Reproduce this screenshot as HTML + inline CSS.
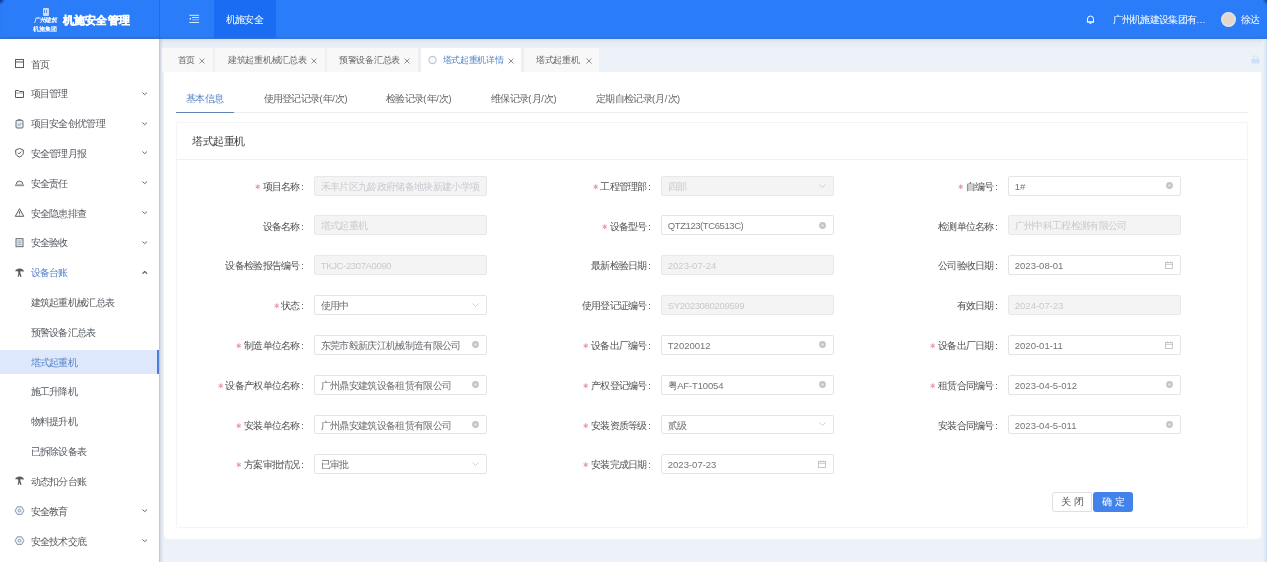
<!DOCTYPE html><html><head><meta charset="utf-8"><style>
*{box-sizing:border-box;margin:0;padding:0}
html,body{width:1267px;height:562px;overflow:hidden;background:#edf1f8;font-family:"Liberation Sans",sans-serif;color:#606266}
.a{position:absolute;white-space:nowrap}
svg{position:absolute;overflow:visible}
#hdr{position:absolute;left:0;top:0;width:1267px;height:38.5px;background:#2b7cf8;box-shadow:inset 0 -2px 1.5px rgba(80,100,150,.32)}
#side{position:absolute;left:0;top:38.5px;width:160px;height:524px;background:#fff;border-right:1px solid #c3c7cf;box-shadow:1px 0 3px rgba(0,21,41,.15)}
.mt{position:absolute;font-size:10px;line-height:12px;color:#525356;white-space:nowrap;letter-spacing:-0.7px}
.lat{font-size:9.2px;letter-spacing:0}
.it .lat{color:#737478;font-size:9.5px}
.it.dis .lat{color:#c8cacf}
.tab{position:absolute;top:48px;height:24px;background:#f8f8f9}
.tt{position:absolute;font-size:9.4px;line-height:12px;color:#666;white-space:nowrap;letter-spacing:-0.3px}
#card{position:absolute;left:164px;top:71.5px;width:1097px;height:467.7px;background:#fff;border-radius:2px 2px 4px 4px}
.lab{position:absolute;font-size:10px;line-height:12px;color:#505153;white-space:nowrap;text-align:right;letter-spacing:-0.7px}
.req{position:relative;display:inline-block;vertical-align:baseline;top:-0.5px;margin-right:2px}
.inp{position:absolute;width:173.6px;height:19.8px;border:1px solid #e4e4e6;border-radius:2px;background:#fff}
.inp.dis{background:#f4f4f5;border-color:#e8e8e9}
.it{position:absolute;font-size:10px;line-height:12px;color:#6a6c70;white-space:nowrap;letter-spacing:-0.67px}
.it.dis{color:#c8cacf}
</style></head><body><div id="root" style="position:absolute;left:0;top:0;width:1267px;height:562px;overflow:hidden;will-change:transform">
<div class="a" style="left:160px;top:38px;width:1107px;height:10px;background:linear-gradient(to bottom,#d3e1fb 0,#dfe4f0 25%,#e3f0f8 55%,#efecf5 88%,#ecf0f8 100%)"></div>
<div id="hdr"></div>
<div class="a" style="left:159px;top:0;width:1px;height:38px;background:rgba(0,40,140,.18)"></div>
<div class="a" style="left:214px;top:0;width:62px;height:38px;background:#1a6cf2"></div>
<div class="a" style="left:225.5px;top:13.5px;font-size:10px;letter-spacing:-0.6px;line-height:12px;color:#fff">机施安全</div>
<svg style="left:188.5px;top:14px" width="11" height="10" viewBox="0 0 11 10"><g fill="#dcecff"><rect x="0.3" y="0.8" width="9.8" height="1"/><rect x="3" y="3" width="7.1" height="0.9"/><rect x="3" y="5.4" width="7.1" height="0.9" opacity=".7"/><rect x="0.3" y="8" width="9.8" height="1"/><ellipse cx="1.3" cy="4.8" rx="0.8" ry="1.1"/></g></svg>
<div class="a" style="left:42.5px;top:8px;width:6.5px;height:8px;background:#c9dcfb;border-radius:1px"></div>
<div class="a" style="left:44px;top:10px;width:1.2px;height:2.5px;background:#5a8de0"></div>
<div class="a" style="left:46.3px;top:10px;width:1.2px;height:2.5px;background:#5a8de0"></div>
<div class="a" style="left:34px;top:17px;font-size:6px;line-height:7px;color:#fff;font-weight:bold;font-family:'Liberation Serif',serif;font-style:italic;letter-spacing:-0.5px">广州建筑</div>
<div class="a" style="left:33px;top:25px;font-size:6.2px;line-height:7px;color:#fff;font-weight:bold">机施集团</div>
<div class="a" style="left:63px;top:13.5px;letter-spacing:0.15px;font-size:11.1px;line-height:13px;color:#fff;font-weight:700;-webkit-text-stroke:0.35px #fff">机施安全管理</div>
<svg style="left:1086px;top:15px" width="9" height="9" viewBox="0 0 9 9"><path d="M1.5 7 V4 a3 3 0 0 1 6 0 V7 Z M0.8 7 H8.2 M3.5 8.3 H5.5" fill="none" stroke="#fff" stroke-width="1"/></svg>
<div class="a" style="left:1112.5px;top:13.5px;font-size:10px;letter-spacing:-0.67px;line-height:12px;color:#fff">广州机施建设集团有<span class="lat" style="letter-spacing:0.6px">...</span></div>
<div class="a" style="left:1221px;top:11.5px;width:15px;height:15px;border-radius:50%;background:radial-gradient(circle,#e6d5c9 0,#e3d6d2 50%,#e6e9f2 68%,#edf2fa 100%)"></div>
<div class="a" style="left:1241px;top:13.5px;font-size:10px;letter-spacing:-0.6px;line-height:12px;color:#fff">徐达</div>
<div id="side"></div>
<div class="mt" style="left:30.5px;top:58.5px;color:#555a60">首页</div>
<svg style="left:15px;top:59.0px" width="9" height="9" viewBox="0 0 9 9"><rect x="0.5" y="0.5" width="8" height="8" fill="none" stroke="#5a5c60"/><path d="M0.5 3H8.5" stroke="#5a5c60"/></svg>
<div class="mt" style="left:30.5px;top:88.3px;color:#555a60">项目管理</div>
<svg style="left:15px;top:88.8px" width="9" height="9" viewBox="0 0 9 9"><path d="M0.5 1.5H3.5L4.5 2.5H8.5V8.5H0.5Z" fill="none" stroke="#5a5c60"/><path d="M0.5 4H8.5" stroke="#5a5c60" stroke-width=".6"/></svg>
<svg style="left:142px;top:91.7px" width="5.5" height="3.2" viewBox="0 0 5.5 3.2"><path d="M0.5 0.5L2.75 2.7L5 0.5" fill="none" stroke="#666" stroke-width="1"/></svg>
<div class="mt" style="left:30.5px;top:118.1px;color:#555a60">项目安全创优管理</div>
<svg style="left:15px;top:118.6px" width="9" height="9" viewBox="0 0 9 9"><rect x="1" y="1.3" width="7" height="7.7" rx="1" fill="#e8eef8" stroke="#5a5c60" stroke-width="0.9"/><path d="M3.2 1.3V0.5H5.8V1.3M2.8 5.2L4.1 6.4L6.3 4" fill="none" stroke="#6f7f99" stroke-width="0.9"/></svg>
<svg style="left:142px;top:121.5px" width="5.5" height="3.2" viewBox="0 0 5.5 3.2"><path d="M0.5 0.5L2.75 2.7L5 0.5" fill="none" stroke="#666" stroke-width="1"/></svg>
<div class="mt" style="left:30.5px;top:147.9px;color:#555a60">安全管理月报</div>
<svg style="left:15px;top:148.4px" width="9" height="9" viewBox="0 0 9 9"><path d="M4.5 0.5L8.3 2V4.8C8.3 7 6.5 8.3 4.5 9 C2.5 8.3 0.7 7 0.7 4.8V2Z" fill="none" stroke="#5a5c60"/><path d="M2.9 4.7L4.1 5.9L6.2 3.6" fill="none" stroke="#5a5c60"/></svg>
<svg style="left:142px;top:151.3px" width="5.5" height="3.2" viewBox="0 0 5.5 3.2"><path d="M0.5 0.5L2.75 2.7L5 0.5" fill="none" stroke="#666" stroke-width="1"/></svg>
<div class="mt" style="left:30.5px;top:177.7px;color:#555a60">安全责任</div>
<svg style="left:15px;top:178.2px" width="9" height="9" viewBox="0 0 9 9"><path d="M1.2 6.3A3.3 3.3 0 0 1 7.8 6.3" fill="#eef0f4" stroke="#5a5c60" stroke-width="0.9"/><path d="M0.3 6.8H8.7V7.8H0.3Z" fill="#b9bcc3" stroke="#5a5c60" stroke-width="0.5"/></svg>
<svg style="left:142px;top:181.1px" width="5.5" height="3.2" viewBox="0 0 5.5 3.2"><path d="M0.5 0.5L2.75 2.7L5 0.5" fill="none" stroke="#666" stroke-width="1"/></svg>
<div class="mt" style="left:30.5px;top:207.5px;color:#555a60">安全隐患排查</div>
<svg style="left:15px;top:208.0px" width="9" height="9" viewBox="0 0 9 9"><path d="M4.5 0.7L8.7 8.3H0.3Z" fill="none" stroke="#5a5c60"/><path d="M4.5 3.3V5.8M4.5 6.6V7.4" stroke="#5a5c60"/></svg>
<svg style="left:142px;top:210.9px" width="5.5" height="3.2" viewBox="0 0 5.5 3.2"><path d="M0.5 0.5L2.75 2.7L5 0.5" fill="none" stroke="#666" stroke-width="1"/></svg>
<div class="mt" style="left:30.5px;top:237.4px;color:#555a60">安全验收</div>
<svg style="left:15px;top:237.9px" width="9" height="9" viewBox="0 0 9 9"><rect x="1" y="0.7" width="7" height="8" fill="#e9eef7" stroke="#5a5c60" stroke-width="0.9"/><path d="M2.5 3H6.5M2.5 4.8H6.5M2.5 6.6H6.5" stroke="#7d8aa0" stroke-width="0.7"/></svg>
<svg style="left:142px;top:240.8px" width="5.5" height="3.2" viewBox="0 0 5.5 3.2"><path d="M0.5 0.5L2.75 2.7L5 0.5" fill="none" stroke="#666" stroke-width="1"/></svg>
<div class="mt" style="left:30.5px;top:267.2px;color:#5683c8">设备台账</div>
<svg style="left:15px;top:267.7px" width="9" height="9" viewBox="0 0 9 9"><path d="M0 3.2C1 1.2 3 0.3 5 0.5C7 0.7 8.6 1.8 9.2 3.4L5.6 3.2L5.3 4.5L6.6 8.8H5L4.4 6.3L3.6 8.8H2.6L3.4 5.2L3 3.3Z" fill="#5a5c60"/></svg>
<svg style="left:142px;top:270.6px" width="5.5" height="3.2" viewBox="0 0 5.5 3.2"><path d="M0.5 2.7L2.75 0.5L5 2.7" fill="none" stroke="#555" stroke-width="1.1"/></svg>
<div class="mt" style="left:30.5px;top:297.0px;color:#555a60">建筑起重机械汇总表</div>
<div class="mt" style="left:30.5px;top:326.8px;color:#555a60">预警设备汇总表</div>
<div class="a" style="left:0;top:349.6px;width:159px;height:24px;background:#dde8fc"></div>
<div class="a" style="left:157px;top:349.6px;width:2px;height:24px;background:#4a7fd8"></div>
<div class="mt" style="left:30.5px;top:356.6px;color:#5683c8">塔式起重机</div>
<div class="mt" style="left:30.5px;top:386.4px;color:#555a60">施工升降机</div>
<div class="mt" style="left:30.5px;top:416.2px;color:#555a60">物料提升机</div>
<div class="mt" style="left:30.5px;top:446.0px;color:#555a60">已拆除设备表</div>
<div class="mt" style="left:30.5px;top:475.8px;color:#555a60">动态扣分台账</div>
<svg style="left:15px;top:476.3px" width="9" height="9" viewBox="0 0 9 9"><path d="M0 3.2C1 1.2 3 0.3 5 0.5C7 0.7 8.6 1.8 9.2 3.4L5.6 3.2L5.3 4.5L6.6 8.8H5L4.4 6.3L3.6 8.8H2.6L3.4 5.2L3 3.3Z" fill="#5a5c60"/></svg>
<div class="mt" style="left:30.5px;top:505.6px;color:#555a60">安全教育</div>
<svg style="left:15px;top:506.1px" width="9" height="9" viewBox="0 0 9 9"><path d="M2.3 0.8H6.7L8.9 4.6L6.7 8.4H2.3L0.1 4.6Z" fill="#eef3fb" stroke="#7a8aa0" stroke-width="0.9"/><circle cx="4.5" cy="4.6" r="1.3" fill="none" stroke="#7a8aa0" stroke-width="0.8"/></svg>
<svg style="left:142px;top:509.0px" width="5.5" height="3.2" viewBox="0 0 5.5 3.2"><path d="M0.5 0.5L2.75 2.7L5 0.5" fill="none" stroke="#666" stroke-width="1"/></svg>
<div class="mt" style="left:30.5px;top:535.5px;color:#555a60">安全技术交底</div>
<svg style="left:15px;top:536.0px" width="9" height="9" viewBox="0 0 9 9"><path d="M2.3 0.8H6.7L8.9 4.6L6.7 8.4H2.3L0.1 4.6Z" fill="#eef3fb" stroke="#7a8aa0" stroke-width="0.9"/><circle cx="4.5" cy="4.6" r="1.3" fill="none" stroke="#7a8aa0" stroke-width="0.8"/></svg>
<svg style="left:142px;top:538.9px" width="5.5" height="3.2" viewBox="0 0 5.5 3.2"><path d="M0.5 0.5L2.75 2.7L5 0.5" fill="none" stroke="#666" stroke-width="1"/></svg>
<div class="a" style="left:162px;top:48px;width:437px;height:24px;background:#eeeff2"></div>
<div class="tab" style="left:162px;width:51px;background:#f8f8f9"></div>
<div class="tt" style="left:177.5px;top:54px;color:#666">首页</div>
<svg style="left:199px;top:57.5px" width="6" height="6" viewBox="0 0 6 6"><path d="M0.5 0.5L5.5 5.5M5.5 0.5L0.5 5.5" stroke="#8c8c8c" stroke-width="0.95"/></svg>
<div class="tab" style="left:215px;width:110px;background:#f8f8f9"></div>
<div class="tt" style="left:228px;top:54px;color:#666">建筑起重机械汇总表</div>
<svg style="left:311px;top:57.5px" width="6" height="6" viewBox="0 0 6 6"><path d="M0.5 0.5L5.5 5.5M5.5 0.5L0.5 5.5" stroke="#8c8c8c" stroke-width="0.95"/></svg>
<div class="tab" style="left:327px;width:91px;background:#f8f8f9"></div>
<div class="tt" style="left:339px;top:54px;color:#666">预警设备汇总表</div>
<svg style="left:404px;top:57.5px" width="6" height="6" viewBox="0 0 6 6"><path d="M0.5 0.5L5.5 5.5M5.5 0.5L0.5 5.5" stroke="#8c8c8c" stroke-width="0.95"/></svg>
<div class="tab" style="left:421px;width:100px;background:#fff"></div>
<div class="tt" style="left:442.5px;top:54px;color:#5683c8">塔式起重机详情</div>
<svg style="left:508px;top:57.5px" width="6" height="6" viewBox="0 0 6 6"><path d="M0.5 0.5L5.5 5.5M5.5 0.5L0.5 5.5" stroke="#8c8c8c" stroke-width="0.95"/></svg>
<div class="tab" style="left:524px;width:75px;background:#f8f8f9"></div>
<div class="tt" style="left:536px;top:54px;color:#666">塔式起重机</div>
<svg style="left:586px;top:57.5px" width="6" height="6" viewBox="0 0 6 6"><path d="M0.5 0.5L5.5 5.5M5.5 0.5L0.5 5.5" stroke="#8c8c8c" stroke-width="0.95"/></svg>
<svg style="left:428px;top:56px" width="9" height="8" viewBox="0 0 9 8"><circle cx="4.5" cy="4" r="3.6" fill="#f6f9fd" stroke="#bcc6d3" stroke-width="1.1"/></svg>
<svg style="left:1250.5px;top:55px" width="9" height="9" viewBox="0 0 9 9"><path d="M2.3 4.2V3a2.2 2.2 0 0 1 4.4 0V4.2" fill="none" stroke="#d8e6fa" stroke-width="1.3"/><rect x="0.5" y="4" width="8" height="4.6" rx="0.6" fill="#cde0f8"/></svg>
<div id="card"></div>
<div class="a" style="left:186px;top:92.8px;font-size:10px;letter-spacing:-0.67px;line-height:12px;color:#5683c8">基本信息</div>
<div class="a" style="left:263.5px;top:92.8px;font-size:10px;letter-spacing:-0.67px;line-height:12px;color:#606266">使用登记记录<span class="lat" style="letter-spacing:0.4px">(</span>年<span class="lat" style="letter-spacing:0.4px">/</span>次<span class="lat" style="letter-spacing:0.4px">)</span></div>
<div class="a" style="left:386px;top:92.8px;font-size:10px;letter-spacing:-0.67px;line-height:12px;color:#606266">检验记录<span class="lat" style="letter-spacing:0.4px">(</span>年<span class="lat" style="letter-spacing:0.4px">/</span>次<span class="lat" style="letter-spacing:0.4px">)</span></div>
<div class="a" style="left:491px;top:92.8px;font-size:10px;letter-spacing:-0.67px;line-height:12px;color:#606266">维保记录<span class="lat" style="letter-spacing:0.4px">(</span>月<span class="lat" style="letter-spacing:0.4px">/</span>次<span class="lat" style="letter-spacing:0.4px">)</span></div>
<div class="a" style="left:596px;top:92.8px;font-size:10px;letter-spacing:-0.67px;line-height:12px;color:#606266">定期自检记录<span class="lat" style="letter-spacing:0.4px">(</span>月<span class="lat" style="letter-spacing:0.4px">/</span>次<span class="lat" style="letter-spacing:0.4px">)</span></div>
<div class="a" style="left:176px;top:111.5px;width:1072px;height:1px;background:#eceef1"></div>
<div class="a" style="left:176px;top:111.5px;width:57.5px;height:1.3px;background:#6484b8"></div>
<div class="a" style="left:176px;top:122px;width:1072px;height:405.5px;border:1px solid #f3f4f6;border-radius:2px"></div>
<div class="a" style="left:192px;top:135px;font-size:11px;line-height:13px;color:#3a3a3a;letter-spacing:-0.4px">塔式起重机</div>
<div class="a" style="left:177px;top:158.5px;width:1070px;height:1px;background:#eff0f2"></div>
<div class="lab" style="right:963.2px;top:181.2px"><svg class="req" width="5.5" height="5.5" viewBox="0 0 10 10"><path d="M5 0.5V9.5M1.1 2.75L8.9 7.25M8.9 2.75L1.1 7.25" stroke="#e58f99" stroke-width="1.7"/></svg>项目名称<span class="lat" style="margin-left:1.5px">:</span></div>
<div class="inp dis" style="left:313.8px;top:176.1px"></div>
<div class="it dis" style="left:320.8px;top:181.0px">禾丰片区九龄政府储备地块新建小学项</div>
<div class="lab" style="right:616.2px;top:181.2px"><svg class="req" width="5.5" height="5.5" viewBox="0 0 10 10"><path d="M5 0.5V9.5M1.1 2.75L8.9 7.25M8.9 2.75L1.1 7.25" stroke="#e58f99" stroke-width="1.7"/></svg>工程管理部<span class="lat" style="margin-left:1.5px">:</span></div>
<div class="inp dis" style="left:660.8px;top:176.1px"></div>
<div class="it dis" style="left:667.8px;top:181.0px">四部</div>
<svg style="left:818.8px;top:183.8px" width="7" height="4" viewBox="0 0 7 4"><path d="M0.5 0.5L3.5 3.5L6.5 0.5" fill="none" stroke="#c4c6cb" stroke-width=".8"/></svg>
<div class="lab" style="right:269.20000000000005px;top:181.2px"><svg class="req" width="5.5" height="5.5" viewBox="0 0 10 10"><path d="M5 0.5V9.5M1.1 2.75L8.9 7.25M8.9 2.75L1.1 7.25" stroke="#e58f99" stroke-width="1.7"/></svg>自编号<span class="lat" style="margin-left:1.5px">:</span></div>
<div class="inp " style="left:1007.8px;top:176.1px"></div>
<div class="it " style="left:1014.8px;top:181.0px"><span class="lat">1#</span></div>
<svg style="left:1165.8px;top:182.3px" width="7" height="7" viewBox="0 0 7 7"><circle cx="3.5" cy="3.5" r="3.4" fill="#c2c4c8"/><circle cx="3.5" cy="3.5" r="1.2" fill="#e4e5e8"/></svg>
<div class="lab" style="right:963.2px;top:220.5px">设备名称<span class="lat" style="margin-left:1.5px">:</span></div>
<div class="inp dis" style="left:313.8px;top:215.3px"></div>
<div class="it dis" style="left:320.8px;top:220.2px">塔式起重机</div>
<div class="lab" style="right:616.2px;top:220.5px"><svg class="req" width="5.5" height="5.5" viewBox="0 0 10 10"><path d="M5 0.5V9.5M1.1 2.75L8.9 7.25M8.9 2.75L1.1 7.25" stroke="#e58f99" stroke-width="1.7"/></svg>设备型号<span class="lat" style="margin-left:1.5px">:</span></div>
<div class="inp " style="left:660.8px;top:215.3px"></div>
<div class="it " style="left:667.8px;top:220.2px"><span class="lat" style="letter-spacing:-0.42px">QTZ123(TC6513C)</span></div>
<svg style="left:818.8px;top:221.6px" width="7" height="7" viewBox="0 0 7 7"><circle cx="3.5" cy="3.5" r="3.4" fill="#c2c4c8"/><circle cx="3.5" cy="3.5" r="1.2" fill="#e4e5e8"/></svg>
<div class="lab" style="right:269.20000000000005px;top:220.5px">检测单位名称<span class="lat" style="margin-left:1.5px">:</span></div>
<div class="inp dis" style="left:1007.8px;top:215.3px"></div>
<div class="it dis" style="left:1014.8px;top:220.2px">广州中科工程检测有限公司</div>
<div class="lab" style="right:963.2px;top:260.2px">设备检验报告编号<span class="lat" style="margin-left:1.5px">:</span></div>
<div class="inp dis" style="left:313.8px;top:255.1px"></div>
<div class="it dis" style="left:320.8px;top:260.1px"><span class="lat" style="letter-spacing:-0.36px">TKJC-2307A0090</span></div>
<div class="lab" style="right:616.2px;top:260.2px">最新检验日期<span class="lat" style="margin-left:1.5px">:</span></div>
<div class="inp dis" style="left:660.8px;top:255.1px"></div>
<div class="it dis" style="left:667.8px;top:260.1px"><span class="lat">2023-07-24</span></div>
<div class="lab" style="right:269.20000000000005px;top:260.2px">公司验收日期<span class="lat" style="margin-left:1.5px">:</span></div>
<div class="inp " style="left:1007.8px;top:255.1px"></div>
<div class="it " style="left:1014.8px;top:260.1px"><span class="lat">2023-08-01</span></div>
<svg style="left:1165.3px;top:260.9px" width="8" height="8" viewBox="0 0 8 8"><rect x="0.5" y="1.5" width="7" height="6" fill="none" stroke="#b8babf" stroke-width=".8"/><path d="M0.5 3.3H7.5M2.3 0.5V2M5.7 0.5V2" stroke="#b8babf" stroke-width=".8"/></svg>
<div class="lab" style="right:963.2px;top:300.0px"><svg class="req" width="5.5" height="5.5" viewBox="0 0 10 10"><path d="M5 0.5V9.5M1.1 2.75L8.9 7.25M8.9 2.75L1.1 7.25" stroke="#e58f99" stroke-width="1.7"/></svg>状态<span class="lat" style="margin-left:1.5px">:</span></div>
<div class="inp " style="left:313.8px;top:294.9px"></div>
<div class="it " style="left:320.8px;top:299.8px">使用中</div>
<svg style="left:471.8px;top:302.6px" width="7" height="4" viewBox="0 0 7 4"><path d="M0.5 0.5L3.5 3.5L6.5 0.5" fill="none" stroke="#c4c6cb" stroke-width=".8"/></svg>
<div class="lab" style="right:616.2px;top:300.0px">使用登记证编号<span class="lat" style="margin-left:1.5px">:</span></div>
<div class="inp dis" style="left:660.8px;top:294.9px"></div>
<div class="it dis" style="left:667.8px;top:299.8px"><span class="lat" style="letter-spacing:-0.33px">SY2023080209599</span></div>
<div class="lab" style="right:269.20000000000005px;top:300.0px">有效日期<span class="lat" style="margin-left:1.5px">:</span></div>
<div class="inp dis" style="left:1007.8px;top:294.9px"></div>
<div class="it dis" style="left:1014.8px;top:299.8px"><span class="lat">2024-07-23</span></div>
<div class="lab" style="right:963.2px;top:340.3px"><svg class="req" width="5.5" height="5.5" viewBox="0 0 10 10"><path d="M5 0.5V9.5M1.1 2.75L8.9 7.25M8.9 2.75L1.1 7.25" stroke="#e58f99" stroke-width="1.7"/></svg>制造单位名称<span class="lat" style="margin-left:1.5px">:</span></div>
<div class="inp " style="left:313.8px;top:335.2px"></div>
<div class="it " style="left:320.8px;top:340.1px">东莞市毅新庆江机械制造有限公司</div>
<svg style="left:471.8px;top:341.4px" width="7" height="7" viewBox="0 0 7 7"><circle cx="3.5" cy="3.5" r="3.4" fill="#c2c4c8"/><circle cx="3.5" cy="3.5" r="1.2" fill="#e4e5e8"/></svg>
<div class="lab" style="right:616.2px;top:340.3px"><svg class="req" width="5.5" height="5.5" viewBox="0 0 10 10"><path d="M5 0.5V9.5M1.1 2.75L8.9 7.25M8.9 2.75L1.1 7.25" stroke="#e58f99" stroke-width="1.7"/></svg>设备出厂编号<span class="lat" style="margin-left:1.5px">:</span></div>
<div class="inp " style="left:660.8px;top:335.2px"></div>
<div class="it " style="left:667.8px;top:340.1px"><span class="lat">T2020012</span></div>
<svg style="left:818.8px;top:341.4px" width="7" height="7" viewBox="0 0 7 7"><circle cx="3.5" cy="3.5" r="3.4" fill="#c2c4c8"/><circle cx="3.5" cy="3.5" r="1.2" fill="#e4e5e8"/></svg>
<div class="lab" style="right:269.20000000000005px;top:340.3px"><svg class="req" width="5.5" height="5.5" viewBox="0 0 10 10"><path d="M5 0.5V9.5M1.1 2.75L8.9 7.25M8.9 2.75L1.1 7.25" stroke="#e58f99" stroke-width="1.7"/></svg>设备出厂日期<span class="lat" style="margin-left:1.5px">:</span></div>
<div class="inp " style="left:1007.8px;top:335.2px"></div>
<div class="it " style="left:1014.8px;top:340.1px"><span class="lat">2020-01-11</span></div>
<svg style="left:1165.3px;top:340.9px" width="8" height="8" viewBox="0 0 8 8"><rect x="0.5" y="1.5" width="7" height="6" fill="none" stroke="#b8babf" stroke-width=".8"/><path d="M0.5 3.3H7.5M2.3 0.5V2M5.7 0.5V2" stroke="#b8babf" stroke-width=".8"/></svg>
<div class="lab" style="right:963.2px;top:380.0px"><svg class="req" width="5.5" height="5.5" viewBox="0 0 10 10"><path d="M5 0.5V9.5M1.1 2.75L8.9 7.25M8.9 2.75L1.1 7.25" stroke="#e58f99" stroke-width="1.7"/></svg>设备产权单位名称<span class="lat" style="margin-left:1.5px">:</span></div>
<div class="inp " style="left:313.8px;top:374.9px"></div>
<div class="it " style="left:320.8px;top:379.8px">广州鼎安建筑设备租赁有限公司</div>
<svg style="left:471.8px;top:381.1px" width="7" height="7" viewBox="0 0 7 7"><circle cx="3.5" cy="3.5" r="3.4" fill="#c2c4c8"/><circle cx="3.5" cy="3.5" r="1.2" fill="#e4e5e8"/></svg>
<div class="lab" style="right:616.2px;top:380.0px"><svg class="req" width="5.5" height="5.5" viewBox="0 0 10 10"><path d="M5 0.5V9.5M1.1 2.75L8.9 7.25M8.9 2.75L1.1 7.25" stroke="#e58f99" stroke-width="1.7"/></svg>产权登记编号<span class="lat" style="margin-left:1.5px">:</span></div>
<div class="inp " style="left:660.8px;top:374.9px"></div>
<div class="it " style="left:667.8px;top:379.8px">粤<span class="lat" style="letter-spacing:-0.15px">AF-T10054</span></div>
<svg style="left:818.8px;top:381.1px" width="7" height="7" viewBox="0 0 7 7"><circle cx="3.5" cy="3.5" r="3.4" fill="#c2c4c8"/><circle cx="3.5" cy="3.5" r="1.2" fill="#e4e5e8"/></svg>
<div class="lab" style="right:269.20000000000005px;top:380.0px"><svg class="req" width="5.5" height="5.5" viewBox="0 0 10 10"><path d="M5 0.5V9.5M1.1 2.75L8.9 7.25M8.9 2.75L1.1 7.25" stroke="#e58f99" stroke-width="1.7"/></svg>租赁合同编号<span class="lat" style="margin-left:1.5px">:</span></div>
<div class="inp " style="left:1007.8px;top:374.9px"></div>
<div class="it " style="left:1014.8px;top:379.8px"><span class="lat">2023-04-5-012</span></div>
<svg style="left:1165.8px;top:381.1px" width="7" height="7" viewBox="0 0 7 7"><circle cx="3.5" cy="3.5" r="3.4" fill="#c2c4c8"/><circle cx="3.5" cy="3.5" r="1.2" fill="#e4e5e8"/></svg>
<div class="lab" style="right:963.2px;top:419.8px"><svg class="req" width="5.5" height="5.5" viewBox="0 0 10 10"><path d="M5 0.5V9.5M1.1 2.75L8.9 7.25M8.9 2.75L1.1 7.25" stroke="#e58f99" stroke-width="1.7"/></svg>安装单位名称<span class="lat" style="margin-left:1.5px">:</span></div>
<div class="inp " style="left:313.8px;top:414.7px"></div>
<div class="it " style="left:320.8px;top:419.6px">广州鼎安建筑设备租赁有限公司</div>
<svg style="left:471.8px;top:420.9px" width="7" height="7" viewBox="0 0 7 7"><circle cx="3.5" cy="3.5" r="3.4" fill="#c2c4c8"/><circle cx="3.5" cy="3.5" r="1.2" fill="#e4e5e8"/></svg>
<div class="lab" style="right:616.2px;top:419.8px"><svg class="req" width="5.5" height="5.5" viewBox="0 0 10 10"><path d="M5 0.5V9.5M1.1 2.75L8.9 7.25M8.9 2.75L1.1 7.25" stroke="#e58f99" stroke-width="1.7"/></svg>安装资质等级<span class="lat" style="margin-left:1.5px">:</span></div>
<div class="inp " style="left:660.8px;top:414.7px"></div>
<div class="it " style="left:667.8px;top:419.6px">贰级</div>
<svg style="left:818.8px;top:422.4px" width="7" height="4" viewBox="0 0 7 4"><path d="M0.5 0.5L3.5 3.5L6.5 0.5" fill="none" stroke="#c4c6cb" stroke-width=".8"/></svg>
<div class="lab" style="right:269.20000000000005px;top:419.8px">安装合同编号<span class="lat" style="margin-left:1.5px">:</span></div>
<div class="inp " style="left:1007.8px;top:414.7px"></div>
<div class="it " style="left:1014.8px;top:419.6px"><span class="lat">2023-04-5-011</span></div>
<svg style="left:1165.8px;top:420.9px" width="7" height="7" viewBox="0 0 7 7"><circle cx="3.5" cy="3.5" r="3.4" fill="#c2c4c8"/><circle cx="3.5" cy="3.5" r="1.2" fill="#e4e5e8"/></svg>
<div class="lab" style="right:963.2px;top:459.1px"><svg class="req" width="5.5" height="5.5" viewBox="0 0 10 10"><path d="M5 0.5V9.5M1.1 2.75L8.9 7.25M8.9 2.75L1.1 7.25" stroke="#e58f99" stroke-width="1.7"/></svg>方案审批情况<span class="lat" style="margin-left:1.5px">:</span></div>
<div class="inp " style="left:313.8px;top:454.0px"></div>
<div class="it " style="left:320.8px;top:458.9px">已审批</div>
<svg style="left:471.8px;top:461.8px" width="7" height="4" viewBox="0 0 7 4"><path d="M0.5 0.5L3.5 3.5L6.5 0.5" fill="none" stroke="#c4c6cb" stroke-width=".8"/></svg>
<div class="lab" style="right:616.2px;top:459.1px"><svg class="req" width="5.5" height="5.5" viewBox="0 0 10 10"><path d="M5 0.5V9.5M1.1 2.75L8.9 7.25M8.9 2.75L1.1 7.25" stroke="#e58f99" stroke-width="1.7"/></svg>安装完成日期<span class="lat" style="margin-left:1.5px">:</span></div>
<div class="inp " style="left:660.8px;top:454.0px"></div>
<div class="it " style="left:667.8px;top:458.9px"><span class="lat">2023-07-23</span></div>
<svg style="left:818.3px;top:459.8px" width="8" height="8" viewBox="0 0 8 8"><rect x="0.5" y="1.5" width="7" height="6" fill="none" stroke="#b8babf" stroke-width=".8"/><path d="M0.5 3.3H7.5M2.3 0.5V2M5.7 0.5V2" stroke="#b8babf" stroke-width=".8"/></svg>
<div class="a" style="left:1051.5px;top:492px;width:40px;height:19.5px;border:1px solid #dcdfe6;border-radius:3px 0 0 3px;background:#fff"></div>
<div class="a" style="left:1061px;top:495.5px;font-size:10px;line-height:12px;color:#555;letter-spacing:2.5px">关闭</div>
<div class="a" style="left:1092.5px;top:492px;width:40.5px;height:19.5px;border-radius:3px;background:#4282ea"></div>
<div class="a" style="left:1102px;top:495.5px;font-size:10px;line-height:12px;color:#fff;letter-spacing:2.5px">确定</div>
<div class="a" style="left:1262.5px;top:38.5px;width:4.5px;height:524px;background:linear-gradient(to right,#e9f1fb,#d0e1f7)"></div>
<div class="a" style="left:0;top:0;width:8px;height:8px;background:radial-gradient(circle at 0 0,rgba(0,35,120,.95) 0,rgba(0,40,130,.6) 1.5px,rgba(20,70,170,0) 5px)"></div>
<div class="a" style="left:1259px;top:0;width:8px;height:8px;background:radial-gradient(circle at 100% 0,rgba(10,40,90,.95) 0,rgba(20,60,120,.6) 1.5px,rgba(20,70,170,0) 5px)"></div>
</div></body></html>
